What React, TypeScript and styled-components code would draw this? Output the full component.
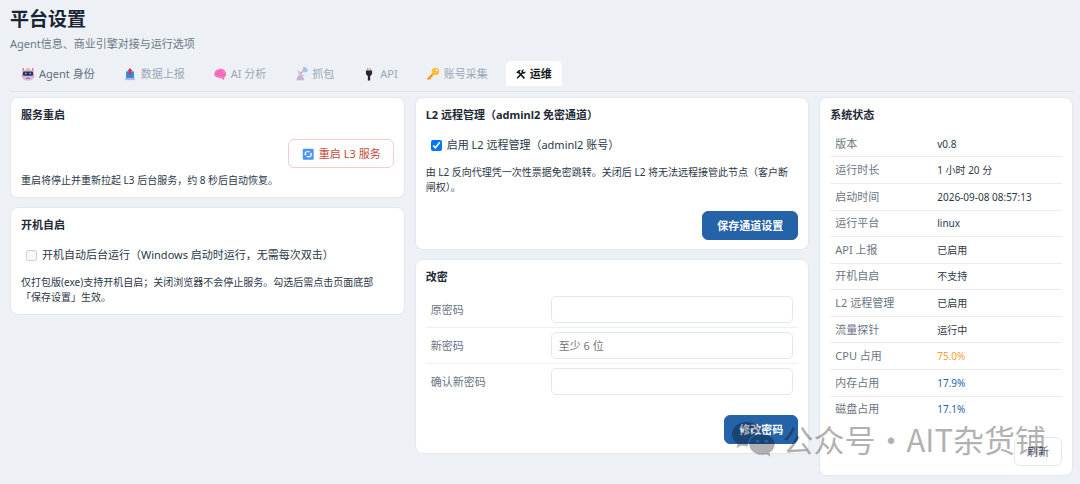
import React from 'react';
import styled, { createGlobalStyle, css } from 'styled-components';

const GlobalStyle = createGlobalStyle`
  *, *::before, *::after { box-sizing: border-box; }
  body {
    margin: 0;
    background: #edf1f6;
    color: #2d3748;
    font-family: "Noto Sans", "Noto Sans CJK SC", sans-serif;
    font-size: 11px;
    line-height: 16px;
  }
  button, input { font-family: inherit; }
`;

const Page = styled.main`
  position: relative;
  padding: 6px 7px 9px 10px;
`;

const Title = styled.h1`
  margin: 0;
  font-size: 19px;
  line-height: 26px;
  font-weight: 700;
  color: #1a2533;
`;

const Subtitle = styled.p`
  margin: 4px 0 9px;
  color: #6b7684;
`;

const Tabs = styled.nav`
  display: flex;
  gap: 8px;
  height: 31px;
  margin-bottom: 5px;
  padding-left: 1px;
  border-bottom: 1px solid #e0e5ec;
`;

const Tab = styled.button<{ $tone?: 'active' | 'dark' }>`
  display: flex;
  align-items: center;
  gap: 4px;
  height: 25px;
  padding: 0 10px;
  border: 0;
  border-radius: 5px 5px 0 0;
  background: transparent;
  font-size: 11px;
  line-height: 16px;
  white-space: nowrap;
  color: #9ba6b4;
  ${({ $tone }) => $tone === 'dark' && css`color: #626d7c;`}
  ${({ $tone }) => $tone === 'active' && css`
    background: #fff;
    color: #111820;
    font-weight: 700;
  `}
`;

const Columns = styled.div`
  display: grid;
  grid-template-columns: 14fr 14fr 9fr;
  gap: 10px;
  align-items: start;
`;

const Column = styled.div`
  display: flex;
  flex-direction: column;
  gap: 9px;
  min-width: 0;
`;

const Card = styled.section`
  display: flex;
  flex-direction: column;
  padding: 9px 10px;
  border: 1px solid #e4e9f0;
  border-radius: 8px;
  background: #fff;
`;

const CardTitle = styled.h2`
  margin: 0;
  font-size: 11px;
  line-height: 16px;
  font-weight: 700;
  color: #1f2a37;
`;

const Note = styled.p<{ $top?: number }>`
  margin: ${({ $top }) => $top ?? 0}px 0 0;
  padding-right: 8px;
  font-size: 10px;
  line-height: 15px;
`;

const Actions = styled.div<{ $top: number }>`
  display: flex;
  justify-content: flex-end;
  margin-top: ${({ $top }) => $top}px;
`;

const Button = styled.button<{ $kind?: 'primary' | 'danger' }>`
  display: flex;
  align-items: center;
  gap: 4px;
  height: 29px;
  padding: 0 12px;
  border: 1px solid #e3e8ef;
  border-radius: 6px;
  background: #fff;
  color: #5a6575;
  font-size: 11px;
  line-height: 16px;
  ${({ $kind }) => $kind === 'primary' && css`
    padding: 0 14px;
    border-color: #2563a8;
    background: #2563a8;
    color: #fff;
    font-weight: 700;
  `}
  ${({ $kind }) => $kind === 'danger' && css`
    border-color: #f3cdc8;
    color: #c0493d;
  `}
`;

const CheckLabel = styled.label`
  display: flex;
  align-items: center;
  gap: 5px;
  margin: 14px 0 12px 5px;
`;

const Checkbox = styled.input`
  width: 11px;
  height: 11px;
  margin: 0;
`;

const Form = styled.form`
  display: flex;
  flex-direction: column;
  margin-top: 7px;
`;

const Field = styled.label`
  display: grid;
  grid-template-columns: 120px 1fr;
  align-items: center;
  height: 36px;
  padding: 0 5px;
  border-bottom: 1px solid #edf0f5;
  color: #6b7684;
  &:last-of-type { border-bottom-color: transparent; }
`;

const TextInput = styled.input`
  width: 100%;
  height: 27px;
  padding: 0 7px;
  border: 1px solid #e3e7f1;
  border-radius: 5px;
  background: #fff;
  font-size: 11px;
  &::placeholder { color: #757575; }
`;

const StatusTable = styled.table`
  width: 100%;
  height: 291px;
  margin-top: 8px;
  border-collapse: collapse;
  font-size: 11px;
  th, td { padding: 0 5px; text-align: left; font-weight: 400; }
  th { width: 44%; color: #6b7684; }
  tr + tr > * { border-top: 1px solid #e8ecf2; }
`;

const Value = styled.td<{ $color?: string }>`
  font-size: 10px;
  color: ${({ $color }) => $color ?? '#2d3748'};
`;

const Watermark = styled.div`
  position: absolute;
  right: 34px;
  top: 419px;
  display: flex;
  align-items: center;
  gap: 8px;
  color: #000;
  opacity: 0.3;
  font-family: "Noto Sans CJK SC", sans-serif;
  font-size: 31px;
  line-height: 40px;
  white-space: nowrap;
  pointer-events: none;
`;

const Icon = ({ children, size = 14 }: { children: React.ReactNode; size?: number }) => (
  <svg width={size} height={size} viewBox="0 0 16 16" aria-hidden="true">{children}</svg>
);

const RobotIcon = () => (
  <Icon>
    <path d="M2.500 1v5M13.500 1v5" stroke="#e8609f" strokeWidth="1.400" />
    <path d="M6 1.500h4v2H6z" fill="#f4b63f" />
    <rect x="2" y="3" width="12" height="12.500" rx="4" fill="#d9b8e4" />
    <rect x="1" y="8" width="2" height="4" rx="1" fill="#e58fc0" />
    <rect x="13" y="8" width="2" height="4" rx="1" fill="#e58fc0" />
    <rect x="2" y="5" width="12" height="5" rx="2" fill="#27304f" />
    <circle cx="5.500" cy="7.500" r="1.200" fill="#63a8e0" />
    <circle cx="10.500" cy="7.500" r="1.200" fill="#63a8e0" />
    <path d="M6 12.800h4" stroke="#7d5a92" strokeWidth="1.200" />
  </Icon>
);

const OutboxIcon = () => (
  <Icon>
    <path d="M3.500 5h9v8h-9z" fill="#2f8be0" />
    <path d="M2.500 12.500h11V15h-11z" fill="#b4b4dc" />
    <path d="M8 1l3 3.500H9.400V8.500H6.600v-4H5z" fill="#dc2f55" />
  </Icon>
);

const BrainIcon = () => (
  <Icon>
    <path d="M1.500 8c0-3 2.400-5.500 5.800-5.800C11 1.700 14.500 4 15 8c.3 2-.8 3.400-2.100 3.700L12.800 15l-3.500-2.300C7.500 13 6.500 12 5 11.700 2.500 11.500 1.500 10.300 1.500 8z" fill="#f972c0" />
    <path d="M3.500 8c2-1 3 .5 4.500-.7M6 4.500c.5 1.500 2.500 1 3.500 1.800M10 9.500c1-1.300 2.500-.6 3.500-1.500" fill="none" stroke="#e04fa6" strokeWidth=".8" />
  </Icon>
);

const DishIcon = () => (
  <Icon>
    <path d="M5 9l5 1.500 2 4.500H2.500z" fill="#c7b3cf" />
    <path d="M4.500 3.500c-1.200 4.200 2.800 7.800 7.500 6.800z" fill="#d3c1da" />
    <path d="M8 7l3-3" stroke="#a48bb1" strokeWidth="1.200" />
    <path d="M10 3c2 0 3 1 3 3M10.500 1c2.700 0 4.500 1.800 4.500 4.500" fill="none" stroke="#7bb2f4" strokeWidth="1.300" />
  </Icon>
);

const PlugIcon = () => (
  <Icon>
    <path d="M6.600 1v4M9.400 1v4" stroke="#c9a06a" strokeWidth="1.300" />
    <path d="M4.500 4h7v4L9.300 10.500v4.800H6.700v-4.800L4.500 8z" fill="#2c2136" />
  </Icon>
);

const KeyIcon = () => (
  <Icon>
    <path d="M8.500 7.500L2.500 13.500" stroke="#f39b25" strokeWidth="2.500" strokeLinecap="round" />
    <path d="M3.500 12l2 2M5.500 10l1.700 1.700" stroke="#f39b25" strokeWidth="1.500" />
    <circle cx="10.800" cy="5.200" r="4.300" fill="#ffbf38" />
    <circle cx="12.300" cy="3.700" r="1" fill="#edf1f6" />
  </Icon>
);

const ToolsIcon = () => (
  <Icon size={10}>
    <path d="M4.500 5.500L13.500 15" stroke="#111820" strokeWidth="2.600" />
    <path d="M.5 5.500L4.500 1.500 8 2 5.800 4 7 5.400 4.800 7.500 3.500 6 2 7.200z" fill="#111820" />
    <path d="M2.500 14L10.500 6" stroke="#111820" strokeWidth="2.600" strokeLinecap="round" />
    <path d="M12.800 1L11 3.500l1.500 1.600L15.200 3.500c.5 2.300-1 4.200-3.600 4L8.500 5C8.500 2.500 10.300.6 12.800 1z" fill="#111820" />
  </Icon>
);

const RefreshIcon = () => (
  <Icon>
    <rect x="2" y="2" width="12.500" height="12.500" rx="1.500" fill="#4a95f2" />
    <path d="M5 8.500V6.700c0-.7.500-1.200 1.200-1.200H10M11.500 7.800v2c0 .7-.5 1.200-1.200 1.200H6.500" fill="none" stroke="#fff" strokeWidth="1.200" />
    <path d="M3.500 7.800h3L5 10zM10 8.600h3l-1.500-2.200z" fill="#fff" />
  </Icon>
);

const WeChatIcon = () => (
  <svg width="43" height="36" viewBox="0 0 43 36" aria-hidden="true">
    <path fillRule="evenodd" fill="currentColor" d="M15 1C6.700 1 0 6.400 0 13.200c0 3.900 2.200 7.300 5.700 9.500L4.500 27l5-2.600c1.700.5 3.500.8 5.500.8h1C15 17 22 11 30 11.400 28.500 5.400 22.400 1 15 1zM10 7.400a2 2 0 110 4 2 2 0 010-4zm10 0a2 2 0 110 4 2 2 0 010-4z" />
    <path fillRule="evenodd" fill="currentColor" d="M30 13c-7 0-12.600 4.700-12.600 10.400S23 33.800 30 33.800c1.500 0 3-.2 4.300-.6l4.200 2.200-1.100-3.600c3.200-1.900 5.200-5 5.200-8.400C42.600 17.700 37 13 30 13zm-4.300 5.400a1.700 1.700 0 110 3.400 1.700 1.700 0 010-3.400zm8.600 0a1.700 1.700 0 110 3.400 1.700 1.700 0 010-3.400z" />
  </svg>
);

const tabs: { label: string; icon: React.ReactNode; tone?: 'active' | 'dark' }[] = [
  { label: 'Agent 身份', icon: <RobotIcon />, tone: 'dark' },
  { label: '数据上报', icon: <OutboxIcon /> },
  { label: 'AI 分析', icon: <BrainIcon /> },
  { label: '抓包', icon: <DishIcon /> },
  { label: 'API', icon: <PlugIcon /> },
  { label: '账号采集', icon: <KeyIcon /> },
  { label: '运维', icon: <ToolsIcon />, tone: 'active' },
];

const status: { name: string; value: string; color?: string }[] = [
  { name: '版本', value: 'v0.8' },
  { name: '运行时长', value: '1 小时 20 分' },
  { name: '启动时间', value: '2026-09-08 08:57:13' },
  { name: '运行平台', value: 'linux' },
  { name: 'API 上报', value: '已启用' },
  { name: '开机自启', value: '不支持' },
  { name: 'L2 远程管理', value: '已启用' },
  { name: '流量探针', value: '运行中' },
  { name: 'CPU 占用', value: '75.0%', color: '#f5a02c' },
  { name: '内存占用', value: '17.9%', color: '#2563a8' },
  { name: '磁盘占用', value: '17.1%', color: '#2563a8' },
];

export default function App() {
  return (
    <Page>
      <GlobalStyle />
      <Title>平台设置</Title>
      <Subtitle>Agent信息、商业引擎对接与运行选项</Subtitle>
      <Tabs>
        {tabs.map((t) => (
          <Tab key={t.label} type="button" $tone={t.tone}>{t.icon}{t.label}</Tab>
        ))}
      </Tabs>
      <Columns>
        <Column>
          <Card>
            <CardTitle>服务重启</CardTitle>
            <Actions $top={16}>
              <Button type="button" $kind="danger"><RefreshIcon />重启 L3 服务</Button>
            </Actions>
            <Note $top={5}>重启将停止并重新拉起 L3 后台服务，约 8 秒后自动恢复。</Note>
          </Card>
          <Card>
            <CardTitle>开机自启</CardTitle>
            <CheckLabel>
              <Checkbox type="checkbox" disabled />
              开机自动后台运行（Windows 启动时运行，无需每次双击）
            </CheckLabel>
            <Note>仅打包版(exe)支持开机自启；关闭浏览器不会停止服务。勾选后需点击页面底部「保存设置」生效。</Note>
          </Card>
        </Column>
        <Column>
          <Card>
            <CardTitle>L2 远程管理（adminl2 免密通道）</CardTitle>
            <CheckLabel>
              <Checkbox type="checkbox" defaultChecked />
              启用 L2 远程管理（adminl2 账号）
            </CheckLabel>
            <Note>由 L2 反向代理凭一次性票据免密跳转。关闭后 L2 将无法远程接管此节点（客户断闸权）。</Note>
            <Actions $top={16}>
              <Button type="button" $kind="primary">保存通道设置</Button>
            </Actions>
          </Card>
          <Card>
            <CardTitle>改密</CardTitle>
            <Form onSubmit={(e) => e.preventDefault()}>
              <Field>原密码<TextInput type="password" autoComplete="current-password" /></Field>
              <Field>新密码<TextInput type="password" autoComplete="new-password" placeholder="至少 6 位" /></Field>
              <Field>确认新密码<TextInput type="password" autoComplete="new-password" /></Field>
              <Actions $top={15}>
                <Button type="submit" $kind="primary">修改密码</Button>
              </Actions>
            </Form>
          </Card>
        </Column>
        <Card>
          <CardTitle>系统状态</CardTitle>
          <StatusTable>
            <tbody>
              {status.map((s) => (
                <tr key={s.name}>
                  <th scope="row">{s.name}</th>
                  <Value $color={s.color}>{s.value}</Value>
                </tr>
              ))}
            </tbody>
          </StatusTable>
          <Actions $top={15}>
            <Button type="button">刷新</Button>
          </Actions>
        </Card>
      </Columns>
      <Watermark>
        <WeChatIcon />
        <span>公众号·AIT杂货铺</span>
      </Watermark>
    </Page>
  );
}
